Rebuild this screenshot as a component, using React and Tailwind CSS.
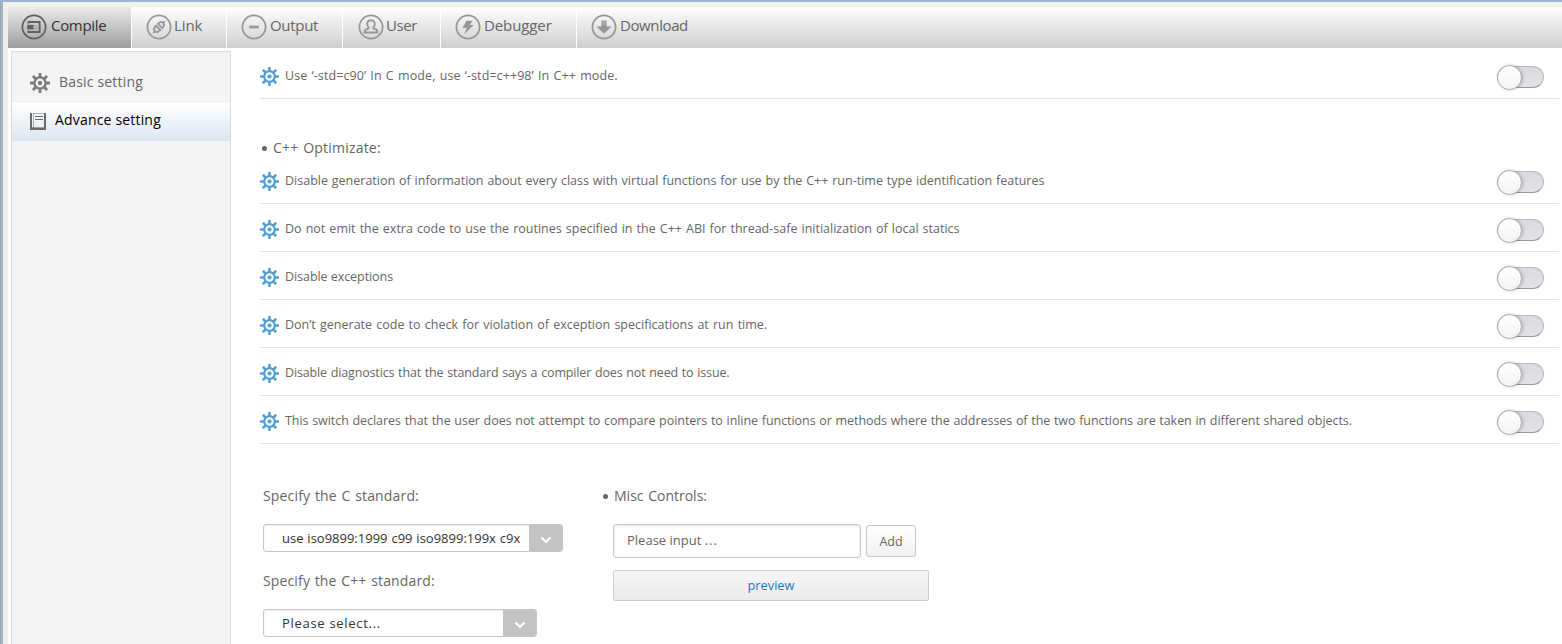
import React from "react";

const FONT = "font-['Open_Sans','Noto_Sans',sans-serif]";

function Gear({ className }) {
  const teeth = [0, 45, 90, 135, 180, 225, 270, 315];
  return (
    <svg viewBox="0 0 20 20" className={className} fill="currentColor">
      {teeth.map((a) => (
        <rect key={a} x="8.6" y="0" width="2.8" height="4.6" rx="0.4" transform={`rotate(${a} 10 10)`} />
      ))}
      <circle cx="10" cy="10" r="5.6" fill="none" stroke="currentColor" strokeWidth="2.4" />
      <circle cx="10" cy="10" r="2.2" />
    </svg>
  );
}

function RoundIcon({ children }) {
  return (
    <svg viewBox="0 0 26 26" className="h-[26px] w-[26px] shrink-0" fill="none" stroke="currentColor">
      <circle cx="13" cy="13" r="11.6" strokeWidth="1.7" />
      {children}
    </svg>
  );
}

const icons = {
  compile: (
    <g>
      <path d="M7.500 9.500V8h11.100v10H7.500v-1.500" strokeWidth="1.900" />
      <rect x="6.200" y="10.800" width="6.300" height="4.600" fill="currentColor" stroke="none" />
      <path d="M12.500 11.500h2.700v3.400h-2.700" strokeWidth="1" opacity=".45" />
    </g>
  ),
  link: (
    <g strokeWidth="1.700" transform="rotate(-45 13 13)">
      <path d="M11.900 9v8M11.900 10.200H10a2.800 2.800 0 0 0 0 5.600h1.900M14.500 9v8M14.500 10.200h1.500a2.800 2.800 0 0 1 0 5.600h-1.500M4.800 13h2.400M18.800 13h2.400" />
      <path d="M9 13h2.500M15 13h2" strokeWidth="1" opacity=".4" />
    </g>
  ),
  output: <path d="M8.200 13h9.600" strokeWidth="2.800" />,
  user: (
    <path
      d="M13 6.200c-2.600 0-3.800 1.700-3.800 3.600 0 1.500.6 2.800 1.500 3.600v1L7.600 15.700c-.8.4-1 1.100-1 2.800h12.800c0-1.700-.2-2.400-1-2.800l-3.100-1.300v-1c.9-.8 1.500-2.100 1.500-3.600 0-1.900-1.200-3.600-3.800-3.600z"
      strokeWidth="1.900"
    />
  ),
  debugger: <path d="M11.500 6.800h6.300l-3 4.200h3.900L9.100 20.500l2.500-6.500H7.500z" fill="currentColor" stroke="none" />,
  download: (
    <g fill="currentColor" stroke="none">
      <path d="M10.300 10.300h5.400v2.200h4.900L13 19.800l-7.600-7.300h4.900z" />
      <path d="M10.300 6.400h5.400v3.900h-5.400z" opacity=".8" />
    </g>
  ),
};

const tabs = [
  { id: "compile", label: "Compile", box: "w-[124px] pl-[13px]", text: "ml-[4px] tracking-[-0.3px]", active: true },
  { id: "link", label: "Link", box: "w-[95px] pl-[14px]", text: "ml-[2px] tracking-[-0.1px]" },
  { id: "output", label: "Output", box: "w-[116px] pl-[14px]", text: "ml-[3px] tracking-[-0.3px]" },
  { id: "user", label: "User", box: "w-[98px] pl-[15px]", text: "ml-[2px] tracking-[-0.4px]" },
  { id: "debugger", label: "Debugger", box: "w-[136px] pl-[14px]", text: "ml-[3px] tracking-[-0.1px]" },
  { id: "download", label: "Download", box: "flex-1 pl-[14px]", text: "ml-[3px] tracking-[-0.4px]", last: true },
];

function Tab({ tab }) {
  const look = tab.active
    ? "bg-linear-to-b from-[#ebebeb] to-[#9e9e9e] text-[#606060]"
    : "bg-linear-to-b from-[#fefefe] to-[#cfcfcf] text-[#979797]";
  return (
    <div className={`flex h-[41px] items-start pt-[7px] ${tab.box} ${look} ${tab.last ? "" : "border-r border-white"}`}>
      <RoundIcon>{icons[tab.id]}</RoundIcon>
      <span className={`whitespace-nowrap text-[15px] leading-[22px] ${tab.text} ${tab.active ? "text-[#333]" : "text-[#666]"}`}>
        {tab.label}
      </span>
    </div>
  );
}

function Toggle() {
  return (
    <div className="mt-[14px] flex h-[25px] w-[48px] shrink-0 items-start">
      <div className="mt-px flex h-[22px] w-[47px] items-center rounded-full border border-[#b9b9bb] border-b-[#98989b] bg-linear-to-b from-[#d9dadf] to-[#e2e3e8]">
        <div className="-ml-px h-[25px] w-[25px] shrink-0 rounded-full border border-[#ababab] bg-linear-to-b from-white to-[#f4f4f4] shadow-[1px_0_3px_rgba(0,0,0,0.22)]" />
      </div>
    </div>
  );
}

function Row({ text, fit }) {
  return (
    <div className="flex h-[48px] items-start border-b border-[#dbe5e6] pr-[14px]">
      <Gear className="mt-[16px] h-[19px] w-[19px] shrink-0 text-[#569fd5]" />
      <span className={`ml-[6px] mt-[15px] flex-1 whitespace-nowrap text-[12.5px] leading-[19px] text-[#666] ${fit}`}>{text}</span>
      <Toggle />
    </div>
  );
}

const rows = [
  { text: "Disable generation of information about every class with virtual functions for use by the C++ run-time type identification features", fit: "[word-spacing:0.6px]" },
  { text: "Do not emit the extra code to use the routines specified in the C++ ABI for thread-safe initialization of local statics", fit: "[word-spacing:0.82px]" },
  { text: "Disable exceptions", fit: "tracking-[-0.06px]" },
  { text: "Don’t generate code to check for violation of exception specifications at run time.", fit: "[word-spacing:0.95px]" },
  { text: "Disable diagnostics that the standard says a compiler does not need to issue.", fit: "tracking-[-0.15px] [word-spacing:0.7px]" },
  { text: "This switch declares that the user does not attempt to compare pointers to inline functions or methods where the addresses of the two functions are taken in different shared objects.", fit: "tracking-[-0.05px] [word-spacing:0.51px]" },
];

function Select({ label, width, fit }) {
  return (
    <div className={`flex h-[28px] overflow-hidden rounded-[3px] border border-[#c6c6c6] bg-white shadow-[inset_0_1px_2px_rgba(0,0,0,0.08)] ${width}`}>
      <span className={`flex-1 whitespace-nowrap pl-[18px] text-[13px] leading-[26px] text-[#333] ${fit}`}>{label}</span>
      <span className="flex w-[33px] shrink-0 items-center justify-center bg-[#c3c3c3]">
        <svg viewBox="0 0 12 8" className="mt-[3px] h-[8px] w-[12px]" fill="none" stroke="#fff" strokeWidth="2.4">
          <path d="M1.500 1.500L6 5.800l4.500-4.300" />
        </svg>
      </span>
    </div>
  );
}

export default function App() {
  return (
    <div className={`flex h-[644px] w-[1562px] overflow-hidden border-t-2 border-[#9ab4d2] bg-[#f0f0f0] ${FONT}`}>
      <div className="w-px shrink-0 bg-[#a8a8a8]" />
      <div className="w-[2px] shrink-0 bg-[#9ab4d2]" />
      <div className="flex min-w-0 flex-1 flex-col pl-[5px] pt-[5px]">
        <div className="flex h-[41px] shrink-0">
          {tabs.map((t) => (
            <Tab key={t.id} tab={t} />
          ))}
        </div>
        <div className="flex flex-1 bg-white pl-[3px] pt-[3px]">
          <div className="h-[600px] w-[220px] shrink-0 border border-[#dcdcdc] bg-[#f4f4f4]">
            <div className="flex h-[51px] items-start pl-[18px] pt-[20px]">
              <Gear className="mt-px h-[20px] w-[20px] text-[#7b7b7b]" />
              <span className="ml-[9px] text-[14px] leading-[20px] tracking-[0.18px] text-[#666]">Basic setting</span>
            </div>
            <div className="flex h-[38px] items-start bg-linear-to-b from-white to-[#dbe6f0] pl-[18px] pt-[7px]">
              <svg viewBox="0 0 16 17" className="mt-[3px] h-[17px] w-[16px]" fill="none" stroke="#6b6b6b">
                <path d="M1 0v17M15 0v17" strokeWidth="2" />
                <path d="M0 15.700h16" strokeWidth="2.600" />
                <path d="M3.500 0v16M3 .5h12" strokeWidth="1" opacity=".5" />
                <path d="M5 3.500h8M5 6.500h8" strokeWidth="1.200" />
              </svg>
              <span className="ml-[9px] text-[14px] leading-[20px] tracking-[0.18px] text-black">Advance setting</span>
            </div>
          </div>
          <div className="ml-[29px] mr-[3px] min-w-0 flex-1">
            <Row text="Use ‘-std=c90’ In C mode, use ‘-std=c++98’ In C++ mode." fit="tracking-[0.08px] [word-spacing:0.9px]" />
            <div className="flex h-[57px] items-start pl-[2px] pt-[39px] text-[14px] leading-[20px] text-[#666]">
              <span className="mt-[8px] mr-[6px] h-[5px] w-[5px] rounded-full bg-[#666]" />
              <span className="tracking-[0.2px] [word-spacing:1px]">C++ Optimizate:</span>
            </div>
            {rows.map((r) => (
              <Row key={r.text} {...r} />
            ))}
            <div className="flex pl-[3px] pt-[42px] text-[14px] leading-[20px] text-[#666]">
              <div className="w-[340px]">
                <div className="tracking-[0.16px] [word-spacing:0.9px]">Specify the C standard:</div>
                <div className="mt-[18px]">
                  <Select label="use iso9899:1999 c99 iso9899:199x c9x" width="w-[300px]" fit="[word-spacing:0.5px]" />
                </div>
                <div className="mt-[19px] tracking-[0.14px] [word-spacing:0.9px]">Specify the C++ standard:</div>
                <div className="mt-[18px]">
                  <Select label="Please select..." width="w-[274px]" fit="tracking-[0.7px]" />
                </div>
              </div>
              <div>
                <div className="flex">
                  <span className="mt-[8px] mr-[6px] h-[5px] w-[5px] rounded-full bg-[#666]" />
                  <span className="[word-spacing:1px]">Misc Controls:</span>
                </div>
                <div className="ml-[10px] mt-[18px] flex h-[34px] items-start">
                  <div className="h-[34px] w-[248px] rounded-[3px] border border-[#c8c8c8] pl-[13px] text-[13px] leading-[31px] shadow-[inset_0_1px_3px_rgba(0,0,0,0.12)]">
                    Please input <span className="tracking-[1px]">...</span>
                  </div>
                  <div className="ml-[5px] mt-px h-[32px] w-[50px] rounded-[3px] border border-[#c8c8c8] bg-linear-to-b from-white to-[#f1f1f1] text-center text-[12.5px] leading-[31px]">
                    Add
                  </div>
                </div>
                <div className="ml-[10px] mt-[12px] h-[31px] w-[316px] rounded-[2px] border border-[#cdcdcd] bg-linear-to-b from-[#f6f6f6] to-[#ebebeb] text-center text-[12.800px] leading-[28px] text-[#1c78c0]">
                  preview
                </div>
              </div>
            </div>
          </div>
        </div>
      </div>
    </div>
  );
}
